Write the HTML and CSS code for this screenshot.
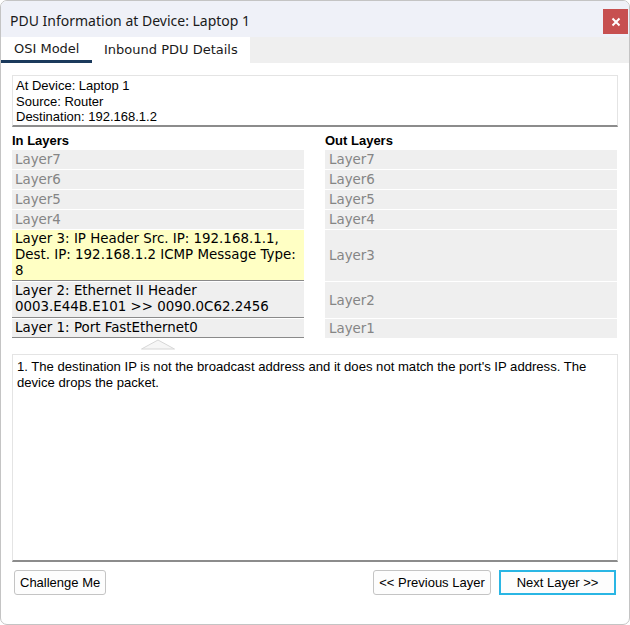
FILE: index.html
```html
<!DOCTYPE html>
<html>
<head>
<meta charset="utf-8">
<link rel="stylesheet" href="styles.css">
</head>
<body>
<div class="window">
  <div class="titlebar">
    <span class="title">PDU Information at Device: Laptop 1</span>
    <button class="close" aria-label="Close">
      <svg width="10" height="10" viewBox="0 0 10 10"><path d="M1.5 1.5 L8.5 8.5 M8.5 1.5 L1.5 8.5" stroke="#fff" stroke-width="2"/></svg>
    </button>
  </div>
  <div class="tabs">
    <div class="tab active">OSI Model</div>
    <div class="tab">Inbound PDU Details</div>
  </div>
  <div class="content">
    <div class="info">
      <div>At Device: Laptop 1</div>
      <div>Source: Router</div>
      <div>Destination: 192.168.1.2</div>
    </div>
    <div class="layers">
      <div class="heading">In Layers</div>
      <div class="heading">Out Layers</div>

      <div class="row">Layer7</div>
      <div class="row out">Layer7</div>
      <div class="row">Layer6</div>
      <div class="row out">Layer6</div>
      <div class="row">Layer5</div>
      <div class="row out">Layer5</div>
      <div class="row">Layer4</div>
      <div class="row out">Layer4</div>
      <div class="row sel yellow">Layer 3: IP Header Src. IP: 192.168.1.1, Dest. IP: 192.168.1.2 ICMP Message Type: 8</div>
      <div class="row out">Layer3</div>
      <div class="row sel l2">Layer 2: Ethernet II Header<br>0003.E44B.E101 &gt;&gt; 0090.0C62.2456</div>
      <div class="row out">Layer2</div>
      <div class="row sel">Layer 1: Port FastEthernet0</div>
      <div class="row out">Layer1</div>

      <div class="arrow">
        <svg width="34" height="11" viewBox="0 0 34 11"><polygon points="0.5,10 17,1 33.5,10" fill="#f6f6f6" stroke="#d6d6d6" stroke-width="1"/></svg>
      </div>
    </div>
    <div class="desc">1. The destination IP is not the broadcast address and it does not match the port's IP address. The device drops the packet.</div>
    <div class="buttons">
      <button class="btn">Challenge Me</button>
      <div class="spacer"></div>
      <button class="btn prev">&lt;&lt; Previous Layer</button>
      <button class="btn next">Next Layer &gt;&gt;</button>
    </div>
  </div>
</div>
</body>
</html>
```

FILE: styles.css
```css
html, body {
  margin: 0;
  padding: 0;
  background: #ffffff;
}
.window {
  width: 630px;
  height: 625px;
  box-sizing: border-box;
  border: 1px solid #c4c4c4;
  border-radius: 7px;
  overflow: hidden;
  background: #ffffff;
  display: flex;
  flex-direction: column;
}
.titlebar {
  height: 36px;
  background: #eff1f8;
  display: flex;
  align-items: center;
  padding-left: 9px;
  padding-right: 1px;
}
.title {
  flex: 1;
  font-family: "Noto Sans", sans-serif;
  font-size: 14px;
  color: #1a1a1a;
  padding-top: 2px;
}
.close {
  width: 25px;
  height: 25px;
  margin-top: 5px;
  border: none;
  padding: 0;
  background: #c75050;
  display: flex;
  align-items: center;
  justify-content: center;
}
.tabs {
  height: 26px;
  background: #efefef;
  display: flex;
}
.tab {
  background: #ffffff;
  font-family: "DejaVu Sans", sans-serif;
  font-size: 13px;
  color: #1a1a1a;
  line-height: 26px;
  padding: 0 12px;
  box-sizing: border-box;
  height: 26px;
}
.tab.active {
  width: 91px;
  padding-left: 13px;
  border-bottom: 3px solid #1b3a5c;
  line-height: 24px;
}
.content {
  padding: 12px 11px 0 11px;
  display: flex;
  flex-direction: column;
}
.info {
  width: 606px;
  box-sizing: border-box;
  height: 52px;
  border: 1px solid #e4e4e4;
  border-bottom: 2px solid #8c8c8c;
  padding: 2px 3px;
  font-family: "Liberation Sans", Arial, sans-serif;
  font-size: 13px;
  line-height: 15.5px;
  color: #000;
}
.layers {
  display: grid;
  grid-template-columns: 292px 292px;
  column-gap: 21px;
  row-gap: 1px;
}
.heading {
  font-family: "Liberation Sans", Arial, sans-serif;
  font-weight: bold;
  font-size: 13px;
  line-height: 16px;
  padding-top: 6px;
  color: #000;
}
.row {
  background: #efefef;
  font-family: "DejaVu Sans", sans-serif;
  font-size: 13.4px;
  line-height: 19px;
  min-height: 19px;
  padding: 0 3px;
  color: #858585;
}
.row.out {
  display: flex;
  align-items: center;
  padding-left: 4px;
}
.row.sel {
  color: #000;
  line-height: 16px;
  min-height: 0;
  padding: 1px 3px 1px 3px;
  border-bottom: 1px solid #8a8a8a;
}
.row.l2 {
  padding-bottom: 2px;
}
.row.yellow {
  background: #ffffc4;
}
.arrow {
  grid-column: 1;
  display: flex;
  justify-content: center;
  height: 15px;
}
.desc {
  width: 606px;
  box-sizing: border-box;
  height: 208px;
  border: 1px solid #e4e4e4;
  border-bottom: 2px solid #8c8c8c;
  padding: 4px 4px;
  font-family: "Liberation Sans", Arial, sans-serif;
  font-size: 13.1px;
  line-height: 16px;
  color: #000;
}
.buttons {
  display: flex;
  margin-top: 8px;
  padding: 0 2px;
  gap: 8px;
}
.spacer {
  flex: 1;
}
.btn {
  height: 25px;
  box-sizing: border-box;
  border: 1px solid #c4c4c4;
  border-radius: 3px;
  background: #fdfdfd;
  font-family: "Liberation Sans", Arial, sans-serif;
  font-size: 13px;
  color: #000;
  padding: 0 5px;
}
.btn.prev {
  width: 118px;
}
.btn.next {
  width: 117px;
  border: 2px solid #2ab6e4;
  border-radius: 0;
}
```
